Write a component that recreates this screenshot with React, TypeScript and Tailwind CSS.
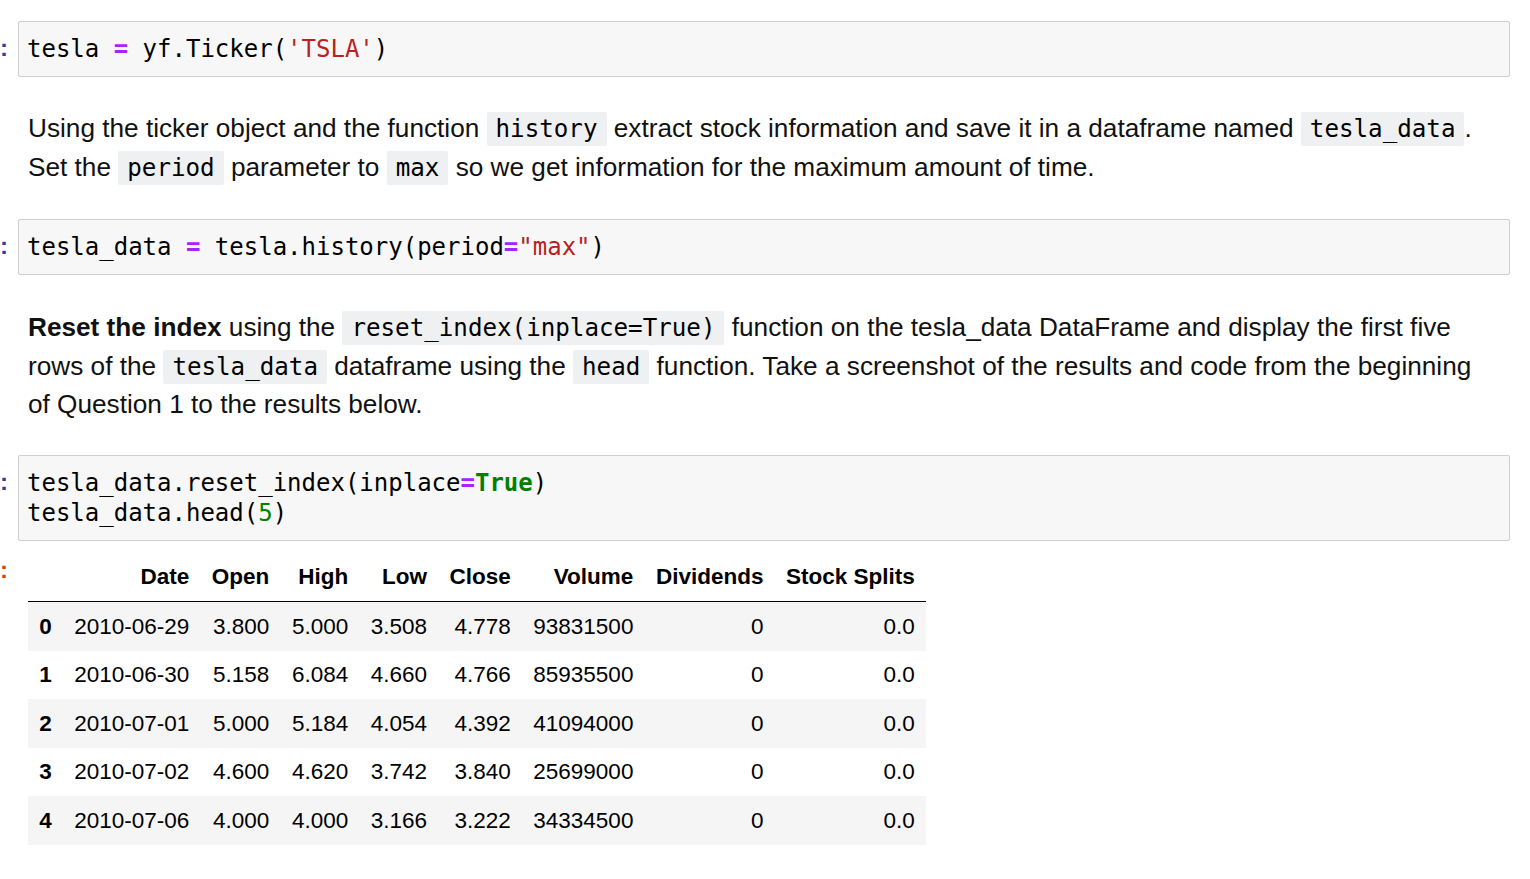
import React from 'react';

const mono = { fontFamily: '"DejaVu Sans Mono", "Liberation Mono", monospace' };
const sans = { fontFamily: '"Liberation Sans", Arial, sans-serif' };

// prompt column, only the trailing colon is on screen
function Prompt({ out }: { out?: boolean }) {
  return (
    <div className="w-[18px] shrink-0">
      <span
        className={`block text-[24px] leading-[30px] font-bold ${out ? 'text-[#D84315]' : 'text-[#303F9F]'}`}
        style={sans}
      >
        :
      </span>
    </div>
  );
}

function CodeCell({ children }: { children: React.ReactNode }) {
  return (
    <div className="flex">
      <div className="pt-[12px]">
        <Prompt />
      </div>
      <div
        className="flex-1 bg-[#f7f7f7] border border-[#cfcfcf] rounded-[2px] py-[12px] pl-[8px] text-[24px] leading-[30px] text-black whitespace-pre"
        style={mono}
      >
        {children}
      </div>
    </div>
  );
}

const Op = () => <span className="text-[#AA22FF] font-bold">=</span>;

function Code({ children }: { children: React.ReactNode }) {
  return (
    <code className="bg-[#eff0f1] rounded-[2px] px-[9px] py-[3px] text-[24.2px] text-black" style={mono}>
      {children}
    </code>
  );
}

function Markdown({ children }: { children: React.ReactNode }) {
  return (
    <div className="flex">
      <div className="w-[18px] shrink-0" />
      <div className="flex-1 pl-[10px] text-[26.2px] leading-[37.6px] text-[#111]" style={sans}>
        {children}
      </div>
    </div>
  );
}

const rows = [
  ['0', '2010-06-29', '3.800', '5.000', '3.508', '4.778', '93831500', '0', '0.0'],
  ['1', '2010-06-30', '5.158', '6.084', '4.660', '4.766', '85935500', '0', '0.0'],
  ['2', '2010-07-01', '5.000', '5.184', '4.054', '4.392', '41094000', '0', '0.0'],
  ['3', '2010-07-02', '4.600', '4.620', '3.742', '3.840', '25699000', '0', '0.0'],
  ['4', '2010-07-06', '4.000', '4.000', '3.166', '3.222', '34334500', '0', '0.0'],
];

const headers = ['', 'Date', 'Open', 'High', 'Low', 'Close', 'Volume', 'Dividends', 'Stock Splits'];

function Output() {
  return (
    <div className="flex">
      <div className="pt-[2px]">
        <Prompt out />
      </div>
      <div className="pl-[10px]">
        <table className="border-collapse text-[22.5px] text-black" style={sans}>
          <thead>
            <tr className="border-b border-black">
              {headers.map((h, i) => (
                <th key={i} className="px-[11.25px] py-[11.25px] text-right font-bold leading-[26px] whitespace-nowrap">
                  {h}
                </th>
              ))}
            </tr>
          </thead>
          <tbody>
            {rows.map((r, ri) => (
              <tr key={ri} className={ri % 2 === 0 ? 'bg-[#f5f5f5]' : 'bg-white'}>
                {r.map((c, ci) =>
                  ci === 0 ? (
                    <th key={ci} className="px-[11.25px] py-[11.25px] text-right font-bold leading-[26px]">
                      {c}
                    </th>
                  ) : (
                    <td key={ci} className="px-[11.25px] py-[11.25px] text-right leading-[26px] whitespace-nowrap">
                      {c}
                    </td>
                  )
                )}
              </tr>
            ))}
          </tbody>
        </table>
      </div>
    </div>
  );
}

export default function App() {
  return (
    <div className="min-h-screen bg-white pt-[21px] pr-[20px]">
      <CodeCell>
        tesla <Op /> yf.Ticker(<span className="text-[#BA2121]">'TSLA'</span>)
      </CodeCell>

      <div className="mt-[33px]">
        <Markdown>
          Using the ticker object and the function <Code>history</Code> extract stock information and save it in a
          dataframe named <Code>tesla_data</Code>.
          <br />
          Set the <Code>period</Code> parameter to <Code>max</Code> so we get information for the maximum amount of time.
        </Markdown>
      </div>

      <div className="mt-[32px]">
        <CodeCell>
          tesla_data <Op /> tesla.history(period<Op />
          <span className="text-[#BA2121]">"max"</span>)
        </CodeCell>
      </div>

      <div className="mt-[34px]">
        <Markdown>
          <b>Reset the index</b> using the <Code>reset_index(inplace=True)</Code> function on the tesla_data DataFrame
          and display the first five
          <br />
          rows of the <Code>tesla_data</Code> dataframe using the <Code>head</Code> function. Take a screenshot of the
          results and code from the beginning
          <br />
          of Question 1 to the results below.
        </Markdown>
      </div>

      <div className="mt-[31px]">
        <CodeCell>
          tesla_data.reset_index(inplace<Op />
          <span className="text-[#008000] font-bold">True</span>)
          {'\n'}tesla_data.head(<span className="text-[#008000]">5</span>)
        </CodeCell>
      </div>

      <div className="mt-[12px]">
        <Output />
      </div>
    </div>
  );
}
